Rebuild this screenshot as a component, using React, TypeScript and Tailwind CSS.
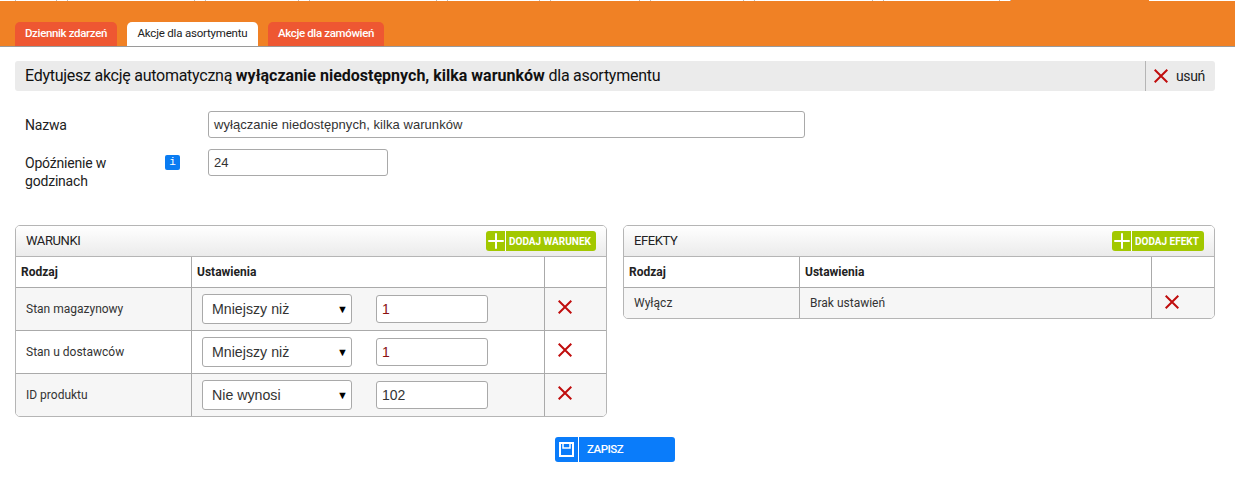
import { Plus } from 'lucide-react'

const FONT = "font-['Roboto',sans-serif]"
const ARIAL = "font-['Liberation_Sans',Arial,sans-serif]"

const TOP_TICKS = [15, 56, 67, 194, 205, 298, 309, 436, 447, 539, 550, 639, 650, 743, 754, 872, 883, 999, 1010]

function Cross({ className = '' }: { className?: string }) {
  return (
    <svg viewBox="0 0 14 14" className={`h-[14px] w-[14px] ${className}`} fill="none" stroke="#c00d0d" strokeWidth="2">
      <path d="M0.7 0.7 13.3 13.3M13.3 0.7 0.7 13.3" />
    </svg>
  )
}

function AddButton({ label, width }: { label: string; width: string }) {
  return (
    <button className={`flex h-5 items-center rounded-[3px] bg-[#a2c800] text-white ${width}`}>
      <span className="flex h-5 w-5 shrink-0 items-center justify-center border-r border-white">
        <Plus size={24} strokeWidth={2} absoluteStrokeWidth className="shrink-0" />
      </span>
      <span className="pl-[3px] text-[10px] font-bold">{label}</span>
    </button>
  )
}

function Select({ value }: { value: string }) {
  return (
    <div className={`flex h-[30px] w-[150px] items-center justify-between rounded-[3px] border border-[#a9a9a9] bg-white pl-[9px] pr-[3px] text-[14.2px] text-[#333] ${ARIAL}`}>
      <span className="pt-px">{value}</span>
      <span className="text-[11px] text-black">▼</span>
    </div>
  )
}

function Head({ colA, colB, colC }: { colA: string; colB: string; colC: string }) {
  return (
    <div className="flex h-[31px] border-b border-[#aaa] text-xs font-bold text-[#222]">
      <div className={`flex items-center border-r border-[#aaa] pl-[5px] ${colA}`}>Rodzaj</div>
      <div className={`flex items-center border-r border-[#aaa] pl-[5px] ${colB}`}>Ustawienia</div>
      <div className={colC} />
    </div>
  )
}

const WARUNKI = [
  { name: 'Stan magazynowy', op: 'Mniejszy niż', val: '1', bg: 'bg-[#f6f6f6]', valColor: 'text-[#8a1010]' },
  { name: 'Stan u dostawców', op: 'Mniejszy niż', val: '1', bg: 'bg-white', valColor: 'text-[#8a1010]' },
  { name: 'ID produktu', op: 'Nie wynosi', val: '102', bg: 'bg-[#f6f6f6]', valColor: 'text-[#333]' },
]

export default function App() {
  return (
    <div className={`h-[503px] w-[1235px] overflow-hidden bg-white text-[#222] ${FONT}`}>
      {/* Top bar */}
      <div className="relative flex h-[47px] items-end border-b border-[#9a9a9a] bg-[#f08125] pl-[15px]">
        <div className="absolute left-0 top-0 h-px w-[1011px] bg-white" />
        <div className="absolute right-0 top-0 h-px w-[86px] bg-white" />
        {TOP_TICKS.map((x) => (
          <div key={x} className="absolute top-0 h-px w-px bg-[#bbb]" style={{ left: x }} />
        ))}
        <div className="flex gap-[10px]">
          <div className="flex h-6 w-[102px] items-center justify-center rounded-t-[5px] bg-[#ee5732] text-[11.5px] font-medium tracking-[-0.35px] text-white">Dziennik zdarzeń</div>
          <div className="flex h-6 w-[131px] items-center justify-center rounded-t-[5px] bg-white text-[11.5px] tracking-[-0.2px] text-[#222]">Akcje dla asortymentu</div>
          <div className="flex h-6 w-[116px] items-center justify-center rounded-t-[5px] bg-[#ee5732] text-[11.5px] font-medium tracking-[-0.35px] text-white">Akcje dla zamówień</div>
        </div>
      </div>

      <div className="pl-[15px] pr-[20px]">
        {/* Title */}
        <div className="mt-[14px] flex h-[30px] items-center justify-between rounded-[3px] bg-[#ebebeb]">
          <div className="pl-[10px] text-base tracking-[-0.26px] text-[#111]">
            Edytujesz akcję automatyczną <b className="tracking-normal">wyłączanie niedostępnych, kilka warunków</b> dla asortymentu
          </div>
          <div className="flex h-[30px] w-[70px] items-center gap-[8px] border-l border-[#b5b5b5] pl-2 text-sm tracking-[-0.4px] text-[#222]">
            <Cross />
            usuń
          </div>
        </div>

        {/* Form */}
        <div className="mt-[20px] flex h-[28px] pl-[10px]">
          <div className="w-[183px] pt-[4px] text-sm leading-5 tracking-[-0.2px]">Nazwa</div>
          <div className={`flex h-[27px] w-[597px] items-center rounded-[3px] border border-[#a9a9a9] pl-[5px] text-[13px] tracking-[0.05px] text-[#333] ${ARIAL}`}>
            wyłączanie niedostępnych, kilka warunków
          </div>
        </div>
        <div className="mt-[10px] flex h-[40px] pl-[10px]">
          <div className="w-[140px] pt-[5px] text-sm leading-[18px] tracking-[-0.2px]">Opóźnienie w godzinach</div>
          <div className="mt-[6px] flex h-[15px] w-[15px] items-center justify-center rounded-[2px] bg-[#0a7cf2] font-['Liberation_Mono',monospace] text-[11px] text-white">i</div>
          <div className="w-[28px]" />
          <div className={`flex h-[27px] w-[180px] items-center rounded-[3px] border border-[#a9a9a9] pl-[5px] text-[13px] text-[#333] ${ARIAL}`}>24</div>
        </div>

        {/* Panels */}
        <div className="mt-[36px] flex items-start gap-[16px]">
          <div className="w-[592px] overflow-hidden rounded-[5px] border border-[#b5b5b5]">
            <div className="flex h-[31px] items-center justify-between border-b border-[#b5b5b5] bg-gradient-to-b from-white to-[#ebebeb] pl-[10px] pr-[10px]">
              <span className="text-[13px] tracking-[-0.4px] text-[#222]">WARUNKI</span>
              <AddButton label="DODAJ WARUNEK" width="w-[110px]" />
            </div>
            <Head colA="w-[176px]" colB="w-[353px]" colC="flex-1" />
            {WARUNKI.map((r, i) => (
              <div key={r.name} className={`flex ${r.bg} ${i < 2 ? 'h-[43px] border-b border-[#aaa]' : 'h-[42px]'}`}>
                <div className="flex w-[176px] items-center border-r border-[#aaa] pl-[10px] text-xs text-[#333]">{r.name}</div>
                <div className="flex w-[353px] items-center border-r border-[#aaa] pl-[10px]">
                  <Select value={r.op} />
                  <div className={`ml-[24px] flex h-[28px] w-[112px] items-center rounded-[3px] border border-[#a9a9a9] bg-white pl-[5px] text-sm ${ARIAL} ${r.valColor}`}>{r.val}</div>
                </div>
                <div className="flex flex-1 items-center justify-center pb-[4px] pr-[22px]">
                  <Cross />
                </div>
              </div>
            ))}
          </div>

          <div className="w-[592px] overflow-hidden rounded-[5px] border border-[#b5b5b5]">
            <div className="flex h-[31px] items-center justify-between border-b border-[#b5b5b5] bg-gradient-to-b from-white to-[#ebebeb] pl-[10px] pr-[10px]">
              <span className="text-[13px] tracking-[-0.4px] text-[#222]">EFEKTY</span>
              <AddButton label="DODAJ EFEKT" width="w-[92px]" />
            </div>
            <Head colA="w-[176px]" colB="w-[352px]" colC="flex-1" />
            <div className="flex h-[30px] bg-[#f6f6f6]">
              <div className="flex w-[176px] items-center border-r border-[#aaa] pl-[10px] text-xs text-[#333]">Wyłącz</div>
              <div className="flex w-[352px] items-center border-r border-[#aaa] pl-[10px] text-xs text-[#333]">Brak ustawień</div>
              <div className="flex flex-1 items-center justify-center pb-[3px] pr-[22px]">
                <Cross />
              </div>
            </div>
          </div>
        </div>

        {/* Save */}
        <div className="mt-[20px] flex justify-center">
          <button className="flex h-[25px] w-[120px] items-center rounded-[3px] bg-[#0a7cfa] text-white">
            <span className="flex h-[25px] w-6 shrink-0 items-center justify-center border-r border-white">
              <svg viewBox="0 0 15 15" className="h-[15px] w-[15px]" fill="none" stroke="currentColor" strokeWidth="2">
                <path d="M1 1H14V14H1Z" />
                <path d="M4 1V6H11V1" strokeWidth="1.5" />
              </svg>
            </span>
            <span className="pl-2 text-[11.5px] font-medium tracking-[-0.5px]">ZAPISZ</span>
          </button>
        </div>
      </div>
    </div>
  )
}
